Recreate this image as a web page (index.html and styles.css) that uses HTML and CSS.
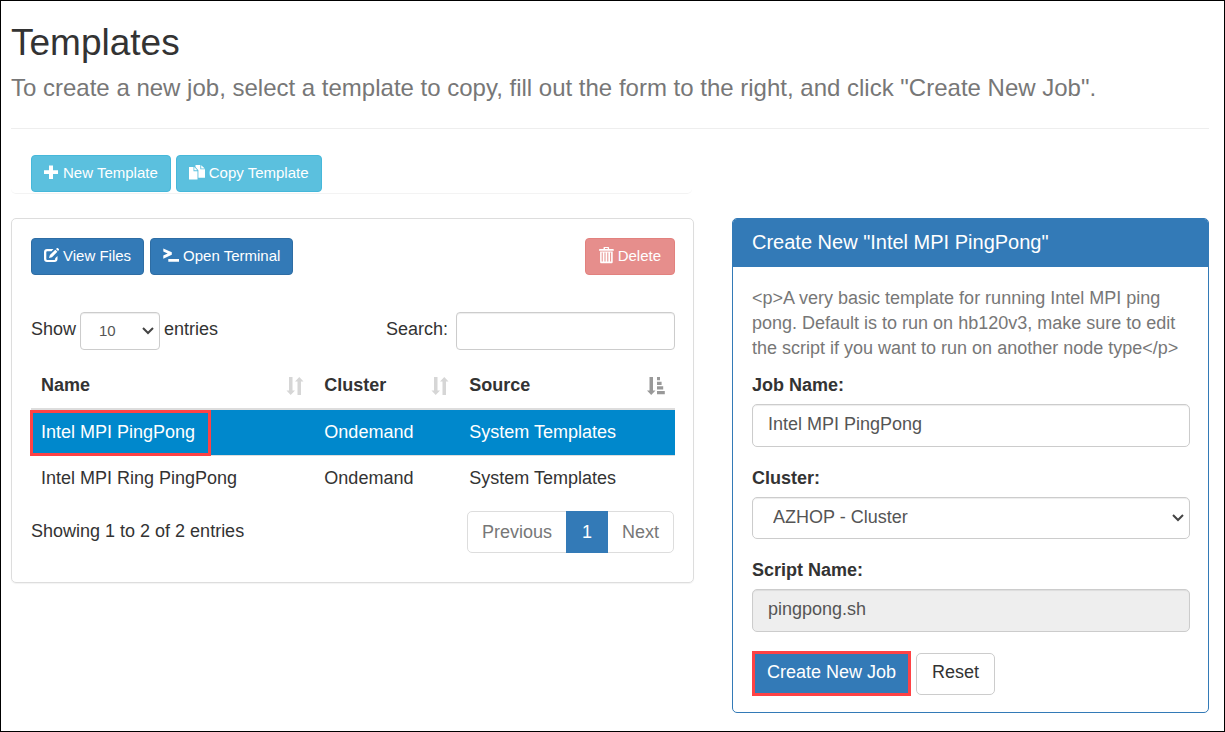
FILE: index.html
```html
<!DOCTYPE html>
<html lang="en">
<head>
<meta charset="utf-8">
<title>Templates</title>
<link rel="stylesheet" href="styles.css">
</head>
<body>
<main class="page">
  <header class="page-header">
    <h1>Templates</h1>
    <p class="lead">To create a new job, select a template to copy, fill out the form to the right, and click "Create New Job".</p>
  </header>

  <div class="columns">
    <div class="left">
      <div class="toolbar">
        <button type="button" class="btn btn-info">
          <svg class="icon" viewBox="0 0 15 15"><path d="M5 0.5h4v4.8h5v3.8h-5v5h-4v-5h-5v-3.8h5z"/></svg>
          New Template</button>
        <button type="button" class="btn btn-info">
          <svg class="icon icon-wide" viewBox="0 0 16 15"><path d="M0 2h4.500v4.200h4v8.300h-8.500z M5.300 2l3 3.200h-3z M6.500 0h4.800v4.200h4.700v8.500h-6.600v-7.400l-2.900-3.200z M12.200 0.200l3.600 3.200h-3.600z"/></svg>
          Copy Template</button>
      </div>

      <section class="panel">
        <div class="actions">
          <button type="button" class="btn btn-primary">
            <svg class="icon" viewBox="0 0 15 15"><path d="M9.500 1H3C1.200 1 0 2.200 0 4v7c0 1.800 1.200 3 3 3h7.500c1.800 0 3-1.200 3-3V8l-2.300 2.300v.7c0 .6-.3.9-.9.9H3.200c-.6 0-.9-.3-.9-.9V4.200c0-.6.300-.9.900-.9h4.300z M5 10l.9-3L11.300 1.700l2.100 2.100L8 9.200z M12 1l1-1c.3-.2.500-.2.800 0l1.200 1.200c.2.300.2.500 0 .8l-1 1z"/></svg>
            View Files</button>
          <button type="button" class="btn btn-primary">
            <svg class="icon icon-wide" viewBox="0 0 16 15"><path d="M0.300 0.500l8.500 3.700v2.600l-8.500 3.900v-3.200l4.400-2-4.400-2z M5.300 11h10.700v2.700h-10.700z"/></svg>
            Open Terminal</button>
          <button type="button" class="btn btn-danger" disabled>
            <svg class="icon icon-trash" viewBox="0 0 15 17"><path fill-rule="evenodd" d="M4.500 2V.8c0-.5.300-.8.800-.8h4c.5 0 .8.300.8.800V2h4c.5 0 .7.300.7.800v1H0v-1c0-.5.300-.8.800-.8z M6 1.100V2h2.700v-.9z M1.100 4.600h12.600V15c0 .8-.5 1.300-1.200 1.300H2.300c-.7 0-1.200-.5-1.200-1.300z M2.700 5.500v9h1v-9z M5.500 5.500v9h1v-9z M8.300 5.500v9h1v-9z M11.100 5.500v9h1v-9z"/></svg>
            Delete</button>
        </div>

        <div class="filters">
          <div class="length">
            <label for="length">Show</label>
            <select id="length" class="control control-small"><option>10</option></select>
            <span>entries</span>
          </div>
          <div class="search">
            <label for="search">Search:</label>
            <input id="search" type="search" class="control control-small">
          </div>
        </div>

        <table class="jobs">
          <colgroup><col class="col-name"><col class="col-cluster"><col></colgroup>
          <thead>
            <tr>
              <th scope="col"><div class="head">Name
                <svg class="sort" viewBox="0 0 18 18"><path d="M3 0h3.500v13.500H9L4.700 18 .5 13.500H3z M11.500 18H15V4.500h2.500L13.300 0 9 4.500h2.500z"/></svg></div></th>
              <th scope="col"><div class="head">Cluster
                <svg class="sort" viewBox="0 0 18 18"><path d="M3 0h3.500v13.500H9L4.700 18 .5 13.500H3z M11.500 18H15V4.500h2.500L13.300 0 9 4.500h2.500z"/></svg></div></th>
              <th scope="col"><div class="head">Source
                <svg class="sort sort-active" viewBox="0 0 18 18"><path d="M2.500 0H6v13.500h2.500L4.200 18 0 13.500h2.500z M10 0h3v3.300h-3z M10 4.700h4.600V8H10z M10 9.300h6.200v3.200H10z M10 14h7.800v3.200H10z"/></svg></div></th>
            </tr>
          </thead>
          <tbody>
            <tr class="selected"><td class="marked">Intel MPI PingPong</td><td>Ondemand</td><td>System Templates</td></tr>
            <tr><td>Intel MPI Ring PingPong</td><td>Ondemand</td><td>System Templates</td></tr>
          </tbody>
        </table>

        <div class="table-footer">
          <div class="info">Showing 1 to 2 of 2 entries</div>
          <nav class="pagination" aria-label="Table pages">
            <a href="#">Previous</a><a href="#" class="current" aria-current="page">1</a><a href="#">Next</a>
          </nav>
        </div>
      </section>
    </div>

    <section class="job-panel">
      <h2>Create New "Intel MPI PingPong"</h2>
      <form class="job-form">
        <p class="description">&lt;p&gt;A very basic template for running Intel MPI ping pong. Default is to run on hb120v3, make sure to edit the script if you want to run on another node type&lt;/p&gt;</p>
        <div class="field">
          <label for="job-name">Job Name:</label>
          <input id="job-name" type="text" class="control" value="Intel MPI PingPong">
        </div>
        <div class="field">
          <label for="cluster">Cluster:</label>
          <select id="cluster" class="control"><option>AZHOP - Cluster</option></select>
        </div>
        <div class="field">
          <label for="script-name">Script Name:</label>
          <input id="script-name" type="text" class="control" value="pingpong.sh" readonly>
        </div>
        <div class="submit-row">
          <button type="button" class="btn-large btn-create">Create New Job</button>
          <button type="reset" class="btn-large btn-reset">Reset</button>
        </div>
      </form>
    </section>
  </div>
</main>
</body>
</html>
```
FILE: styles.css
```css
*, *::before, *::after { box-sizing: border-box; }

body {
  margin: 0;
  min-height: 100vh;
  border: 1px solid #000;
  background: #fff;
  color: #333;
  font-family: "Liberation Sans", Arial, sans-serif;
  font-size: 18px;
  line-height: 25px;
}

button, input, select { font: inherit; }

.page { padding: 19px 15px 18px 10px; }

.page-header {
  border-bottom: 1px solid #eee;
  padding-bottom: 23px;
}
.page-header h1 {
  margin: 0;
  font-size: 37px;
  font-weight: 400;
  line-height: 46px;
}
.lead {
  margin: 5px 0 0;
  color: #777;
  font-size: 24px;
  line-height: 34px;
}

.columns {
  display: grid;
  grid-template-columns: 683fr 477fr;
  column-gap: 38px;
  align-items: start;
  margin-top: 26px;
}

.toolbar {
  display: flex;
  gap: 5px;
  margin-right: 2px;
  padding: 0 20px 1px;
  border-bottom: 1px solid #f3f3f3;
  border-radius: 0 0 5px 5px;
}

.btn {
  display: inline-flex;
  align-items: center;
  gap: 4px;
  height: 37px;
  padding: 0 12px 3px;
  border: 1px solid;
  border-radius: 4px;
  color: #fff;
  font-size: 15px;
  white-space: nowrap;
}
.btn-info { background: #5bc0de; border-color: #46b8da; }
.btn-primary { background: #337ab7; border-color: #2e6da4; }
.btn-danger {
  margin-left: auto;
  padding: 0 13px 3px;
  background: #d9534f;
  border-color: #d43f3a;
  opacity: 0.65;
}

.icon { width: 15px; height: 15px; fill: currentColor; }
.icon-wide { width: 16px; }
.icon-trash { height: 17px; }

.panel {
  margin-top: 24px;
  padding: 19px 18px 29px 19px;
  border: 1px solid #ddd;
  border-radius: 5px;
  box-shadow: 0 1px 1px rgba(0, 0, 0, 0.05);
}

.actions { display: flex; gap: 6px; }

.filters {
  display: flex;
  justify-content: space-between;
  margin-top: 37px;
}
.length, .search { display: flex; align-items: center; }
.length { gap: 4px; }
.search { gap: 8px; }
.length label, .length span, .search label { padding-bottom: 4px; }

.control {
  width: 100%;
  height: 43px;
  padding: 0 15px 2px;
  border: 1px solid #ccc;
  border-radius: 5px;
  background: #fff;
  box-shadow: inset 0 1px 1px rgba(0, 0, 0, 0.075);
  color: #555;
}
.control[readonly] { background: #eee; }
.control-small {
  height: 38px;
  padding: 0 12px;
  border-radius: 4px;
  font-size: 15px;
}
select.control {
  height: 42px;
  appearance: none;
  padding: 0 20px 2px;
  background: #fff url("data:image/svg+xml,%3Csvg xmlns='http://www.w3.org/2000/svg' width='12' height='8'%3E%3Cpath d='M1 1l5 5 5-5' fill='none' stroke='%23444' stroke-width='2'/%3E%3C/svg%3E") no-repeat right 5px center;
}
select.control-small {
  height: 38px;
  padding: 0 18px 2px;
}
.length select { width: 80px; }
.search input { width: 219px; }

.jobs {
  width: 100%;
  margin-top: 13px;
  border-collapse: separate;
  border-spacing: 0;
  table-layout: fixed;
}
.col-name { width: 44%; }
.col-cluster { width: 22.500%; }
.jobs th {
  padding: 10px;
  border-bottom: 2px solid #ddd;
  text-align: left;
}
.head {
  display: flex;
  align-items: center;
  justify-content: space-between;
}
.sort { width: 18px; height: 18px; fill: #d6d6d6; }
.sort-active { fill: #999; }
.jobs td { padding: 10px; height: 45px; }
.jobs .selected td {
  height: 46px;
  border-bottom: 1px solid #ddd;
  background: #08c;
  background-clip: padding-box;
  color: #fff;
}
.marked { position: relative; }
.marked::after {
  content: "";
  position: absolute;
  inset: 0 auto -1px -1px;
  width: 181px;
  border: 3px solid #ff4245;
}

.table-footer {
  display: flex;
  justify-content: space-between;
  align-items: flex-start;
  margin: 10px 1px 0 0;
}
.info { padding-top: 8px; }
.pagination {
  display: flex;
  border: 1px solid #ddd;
  border-radius: 5px;
}
.pagination a {
  padding: 8px 14px 7px;
  color: #777;
  text-decoration: none;
}
.pagination .current {
  margin: -1px 0;
  padding: 9px 16px 8px;
  background: #337ab7;
  color: #fff;
}

.job-panel {
  margin-top: 63px;
  border: 1px solid #337ab7;
  border-radius: 5px;
  overflow: hidden;
}
.job-panel h2 {
  margin: 0;
  padding: 11px 19px 13px;
  background: #337ab7;
  color: #fff;
  font-size: 20px;
  font-weight: 400;
  line-height: 24px;
}
.job-form { padding: 19px 18px 16px 19px; }
.description { margin: 0 0 12px; color: #777; }
.field { margin-bottom: 19px; }
.field label {
  display: block;
  margin-bottom: 6px;
  font-weight: 700;
}
.field .control { display: block; }

.submit-row { display: flex; align-items: center; gap: 5px; }
.btn-large {
  height: 42px;
  padding: 0 15px 2px;
  border: 1px solid #ccc;
  border-radius: 5px;
  background: #fff;
  color: #333;
  white-space: nowrap;
}
.btn-create {
  height: 45px;
  padding: 0 12px 3px;
  border: 3px solid #ff4245;
  border-radius: 0;
  background: #337ab7;
  color: #fff;
}
```
